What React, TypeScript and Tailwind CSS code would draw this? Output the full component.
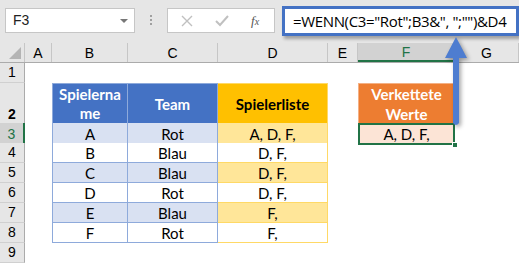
import React from "react";

const cols = ["A", "B", "C", "D", "E", "F", "G"];

const rows = [
  { n: 3, b: "A", c: "Rot", d: "A, D, F,", odd: true },
  { n: 4, b: "B", c: "Blau", d: "D, F,", odd: false },
  { n: 5, b: "C", c: "Blau", d: "D, F,", odd: true },
  { n: 6, b: "D", c: "Rot", d: "D, F,", odd: false },
  { n: 7, b: "E", c: "Blau", d: "F,", odd: true },
  { n: 8, b: "F", c: "Rot", d: "F,", odd: false },
];

const gridCols = "grid grid-cols-[25px_27px_76px_90px_110px_30px_97px_64px]";
const cellFont = { fontFamily: "Lato, 'Liberation Sans', sans-serif" };

const RowHead = ({ n, active }: { n: number; active?: boolean }) => (
  <div
    className={`h-full flex items-end justify-center pb-[2px] border-b border-[#d0d0d0] text-[14px] leading-[16px] ${
      active ? "bg-[#d2d2d2] text-[#217346] border-r-2 border-r-[#217346]" : "bg-[#e6e6e6] text-black border-r border-r-[#ababab]"
    }`}
    style={{ fontFamily: "'Liberation Sans', Arial, sans-serif" }}
  >
    {n}
  </div>
);

const App: React.FC = () => {
  return (
    <div className="relative w-[519px] h-[265px] overflow-hidden bg-white" style={{ fontFamily: "'Liberation Sans', Arial, sans-serif" }}>
      {/* toolbar */}
      <div className="flex items-start h-[43px] bg-[#e6e6e6]">
        <div className="ml-[5px] mt-[8px] w-[130px] h-[25px] bg-white border border-[#c6c6c6] flex items-center justify-between pl-[7px] pr-[6px] text-[14px] text-[#222]">
          <span>F3</span>
          <span className="w-0 h-0 border-l-[4px] border-r-[4px] border-t-[4px] border-l-transparent border-r-transparent border-t-[#777]" />
        </div>
        <div className="w-[32px] mt-[15px] flex flex-col items-center gap-[2px]">
          <span className="w-[2px] h-[2px] bg-[#a0a0a0]" />
          <span className="w-[2px] h-[2px] bg-[#a0a0a0]" />
          <span className="w-[2px] h-[2px] bg-[#a0a0a0]" />
        </div>
        <div className="mt-[8px] w-[108px] h-[25px] bg-white border border-[#c6c6c6] flex items-center">
          <svg width="12" height="12" viewBox="0 0 12 12" className="ml-[13px]">
            <path d="M1 1 L11 11 M11 1 L1 11" stroke="#c0c0c0" strokeWidth="1.4" />
          </svg>
          <svg width="14" height="12" viewBox="0 0 14 12" className="ml-[22px]">
            <path d="M1 6 L5 10 L13 1" stroke="#c0c0c0" strokeWidth="2" fill="none" />
          </svg>
          <span className="ml-[22px] text-[13px] italic text-[#555]" style={{ fontFamily: "'Liberation Serif', serif" }}>
            f<span className="text-[10px]">x</span>
          </span>
        </div>
        <div className="ml-[7px] mt-[6px] flex-1 h-[30px] bg-white border-[3px] border-[#4472c4] shadow-[2px_3px_3px_rgba(0,0,0,0.3)] flex items-center pl-[8px] text-[15px] text-black" style={{ fontFamily: "'Open Sans', sans-serif", letterSpacing: "-0.35px" }}>
          =WENN(C3="Rot";B3&", ";"")&D4
        </div>
      </div>

      {/* column headers */}
      <div className={`${gridCols} h-[20px] bg-[#e6e6e6] border-b border-[#ababab] text-[14px] leading-[16px]`}>
        <div className="relative border-r border-[#c6c6c6]">
          <span className="absolute right-[3px] bottom-[3px] w-0 h-0" style={{ borderRight: "12px solid #b4b4b4", borderTop: "12px solid transparent" }} />
        </div>
        {cols.map((c) => (
          <div
            key={c}
            className={`flex items-center justify-center border-r border-[#c6c6c6] ${
              c === "F" ? "bg-[#d2d2d2] text-[#217346] border-b-2 border-b-[#217346]" : "text-black"
            }`}
          >
            {c}
          </div>
        ))}
      </div>

      {/* row 1 */}
      <div className={`${gridCols} h-[20px]`}>
        <RowHead n={1} />
      </div>

      {/* row 2 */}
      <div className={`${gridCols} h-[40px] text-[15px] font-bold`} style={cellFont}>
        <RowHead n={2} />
        <div />
        <div className="bg-[#4472c4] text-white border border-[#8eaadb] flex items-center justify-center text-center leading-[19px]">
          Spielerna
          <br />
          me
        </div>
        <div className="bg-[#4472c4] text-white border-t border-r border-b border-[#8eaadb] flex items-center justify-center">Team</div>
        <div className="bg-[#ffc000] text-black border-t border-r border-b border-[#ffd966] flex items-center justify-center">Spielerliste</div>
        <div />
        <div className="bg-[#ed7d31] text-white flex items-center justify-center text-center leading-[20px] border border-[#f4b084]">
          Verkettete
          <br />
          Werte
        </div>
        <div />
      </div>

      {/* data rows */}
      {rows.map((r) => (
        <div key={r.n} className={`${gridCols} h-[20px] text-[15px] leading-[18px]`} style={cellFont}>
          <RowHead n={r.n} active={r.n === 3} />
          <div />
          <div className={`${r.odd ? "bg-[#d9e1f2]" : "bg-white"} border-l border-r border-b border-[#8eaadb] flex items-center justify-center`}>{r.b}</div>
          <div className={`${r.odd ? "bg-[#d9e1f2]" : "bg-white"} border-r border-b border-[#8eaadb] flex items-center justify-center`}>{r.c}</div>
          <div className={`${r.odd ? "bg-[#ffe699]" : "bg-white"} border-r border-b border-[#ffd966] flex items-center justify-center`}>{r.d}</div>
          <div />
          {r.n === 3 ? (
            <div className="relative bg-[#fce4d6] border-2 border-[#217346] flex items-center justify-center">
              A, D, F,
              <span className="absolute right-[-5px] bottom-[-5px] w-[6px] h-[6px] bg-[#217346] border border-white" />
            </div>
          ) : (
            <div />
          )}
          <div />
        </div>
      ))}

      {/* row 9 */}
      <div className={`${gridCols} h-[20px]`}>
        <RowHead n={9} />
      </div>

      {/* arrow */}
      <svg className="absolute left-[440px] top-[34px] drop-shadow-[2px_2px_2px_rgba(0,0,0,0.35)]" width="32" height="96" viewBox="0 0 32 96">
        <path d="M16 3 L27 24 L19 24 L19 89 Q16 93 13 89 L13 24 L5 24 Z" fill="#4e7dd0" />
      </svg>
    </div>
  );
};

export default App;
